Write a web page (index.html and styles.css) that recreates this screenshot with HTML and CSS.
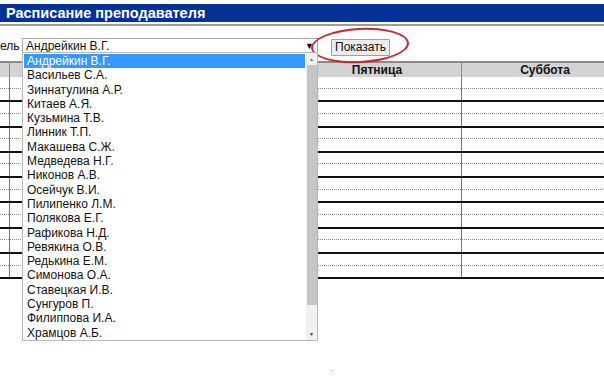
FILE: index.html
```html
<!DOCTYPE html>
<html lang="ru">
<head>
    <meta charset="UTF-8">
    <title>Расписание преподавателя</title>
    <link rel="stylesheet" href="styles.css">
</head>
<body>
    <div class="titlebar">Расписание преподавателя</div>
    <div class="rule"></div>

    <div class="filter">
        <span class="filter-label">ель</span>
        <div class="select">
            <span>Андрейкин В.Г.</span>
            <span class="select-arrow">&#9660;</span>
        </div>
        <button class="show-btn">Показать</button>
        <div class="circle"></div>
    </div>

    <ul class="dropdown" id="teachers">
        <li class="active">Андрейкин В.Г.</li>
        <li>Васильев С.А.</li>
        <li>Зиннатулина А.Р.</li>
        <li>Китаев А.Я.</li>
        <li>Кузьмина Т.В.</li>
        <li>Линник Т.П.</li>
        <li>Макашева С.Ж.</li>
        <li>Медведева Н.Г.</li>
        <li>Никонов А.В.</li>
        <li>Осейчук В.И.</li>
        <li>Пилипенко Л.М.</li>
        <li>Полякова Е.Г.</li>
        <li>Рафикова Н.Д.</li>
        <li>Ревякина О.В.</li>
        <li>Редькина Е.М.</li>
        <li>Симонова О.А.</li>
        <li>Ставецкая И.В.</li>
        <li>Сунгуров П.</li>
        <li>Филиппова И.А.</li>
        <li>Храмцов А.Б.</li>
        <li class="scrollbar">
            <span class="scroll-up">&#9650;</span>
            <span class="scroll-thumb"></span>
            <span class="scroll-down">&#9660;</span>
        </li>
    </ul>

    <table class="schedule">
        <colgroup>
            <col class="col-num">
            <col class="col-day">
            <col class="col-day-sm">
            <col class="col-day-sm">
        </colgroup>
        <thead>
            <tr>
                <th></th>
                <th>Четверг</th>
                <th>Пятница</th>
                <th>Суббота</th>
            </tr>
        </thead>
        <tbody id="rows"></tbody>
    </table>

    <span class="dot"></span>

    <script>
        function render() {
            var tbody = document.getElementById('rows');
            for (var i = 0; i < 8; i++) {
                var html = '';
                html += '<tr class="week-top"><td></td><td></td><td></td><td></td></tr>';
                html += '<tr class="week-bottom"><td></td><td></td><td></td><td></td></tr>';
                tbody.insertAdjacentHTML('beforeend', html);
            }
        }

        render();
    </script>
</body>
</html>
```

FILE: styles.css
```css
html, body{
    margin: 0;
    padding: 0;
    width: 604px;
    height: 389px;
    overflow: hidden;
    background: #fff;
    font-family: "Liberation Sans", Arial, sans-serif;
    position: relative;
}

.titlebar{
    margin-top: 4px;
    height: 18px;
    line-height: 18px;
    padding-left: 6px;
    background: #03319a;
    color: #fff;
    font-size: 14.5px;
    font-weight: bold;
}

.rule{
    margin-top: 2px;
    height: 2px;
    background: #9c9c9c;
}

.filter{
    display: flex;
    align-items: center;
    margin-top: 11px;
    height: 18px;
    position: relative;
}

.filter-label{
    width: 22px;
    font-size: 12px;
    color: #111;
}

.select{
    display: flex;
    justify-content: space-between;
    align-items: center;
    box-sizing: border-box;
    width: 296px;
    height: 16px;
    padding: 0 3px;
    border: 1px solid #a9a9a9;
    font-size: 12px;
    color: #111;
}

.select-arrow{
    font-size: 9px;
}

.show-btn{
    margin-left: 13px;
    margin-top: 2px;
    height: 17px;
    padding: 0 3px;
    border: 1px solid #a0a0a0;
    border-radius: 1px;
    background: #ececec;
    font-family: "Liberation Sans", Arial, sans-serif;
    font-size: 12px;
    color: #111;
}

/* red hand-drawn mark around the button */
.circle{
    position: absolute;
    left: 311px;
    top: -9px;
    width: 94px;
    height: 31px;
    border: 2px solid #c42a30;
    border-radius: 50%;
    transform: rotate(-3deg);
}

.dropdown{
    position: absolute;
    left: 22px;
    top: 52px;
    z-index: 2;
    box-sizing: border-box;
    width: 296px;
    height: 289px;
    margin: 0;
    padding: 1px 12px 0 1px;
    list-style: none;
    background: #fff;
    border: 1px solid #b8b8b8;
    font-size: 12px;
    color: #111;
}

.dropdown li{
    height: 14.3px;
    line-height: 14px;
    padding-left: 3px;
}

.dropdown li.active{
    background: #3399ff;
    color: #fff;
}

.dropdown li.scrollbar{
    position: absolute;
    top: 0;
    right: 0;
    bottom: 0;
    width: 11px;
    height: auto;
    padding: 0;
    background: #f0f0f0;
    display: flex;
    flex-direction: column;
    align-items: center;
}

.scroll-up, .scroll-down{
    height: 12px;
    font-size: 5px;
    line-height: 12px;
    color: #7a7a7a;
}

.scroll-thumb{
    width: 10px;
    height: 240px;
    background: #c6c6c6;
}

.scroll-down{
    margin-top: auto;
    color: #333;
}

.schedule{
    margin-top: 6px;
    width: 629px;
    table-layout: fixed;
    border-collapse: collapse;
}

.col-num{ width: 9px; }
.col-day{ width: 284px; }
.col-day-sm{ width: 168px; }

.schedule th{
    height: 14px;
    padding: 0;
    background: #d3d3d3;
    border-top: 2px solid #8a8a8a;
    border-left: 1px solid #8a8a8a;
    border-right: 1px solid #8a8a8a;
    font-size: 12px;
    font-weight: bold;
    color: #111;
}

.schedule th:first-child{
    border-left: none;
}

.schedule td{
    padding: 0;
    border-left: 1px solid #777;
    border-right: 1px solid #777;
}

.schedule td:first-child{
    border-left: none;
}

.week-top td{
    height: 10.5px;
    border-bottom: 1px dotted #8a8a8a;
}

.week-bottom td{
    height: 11.8px;
    border-bottom: 2px solid #111;
}

.dot{
    position: absolute;
    left: 332px;
    top: 370px;
    width: 1px;
    height: 1px;
    background: #999;
}
```
